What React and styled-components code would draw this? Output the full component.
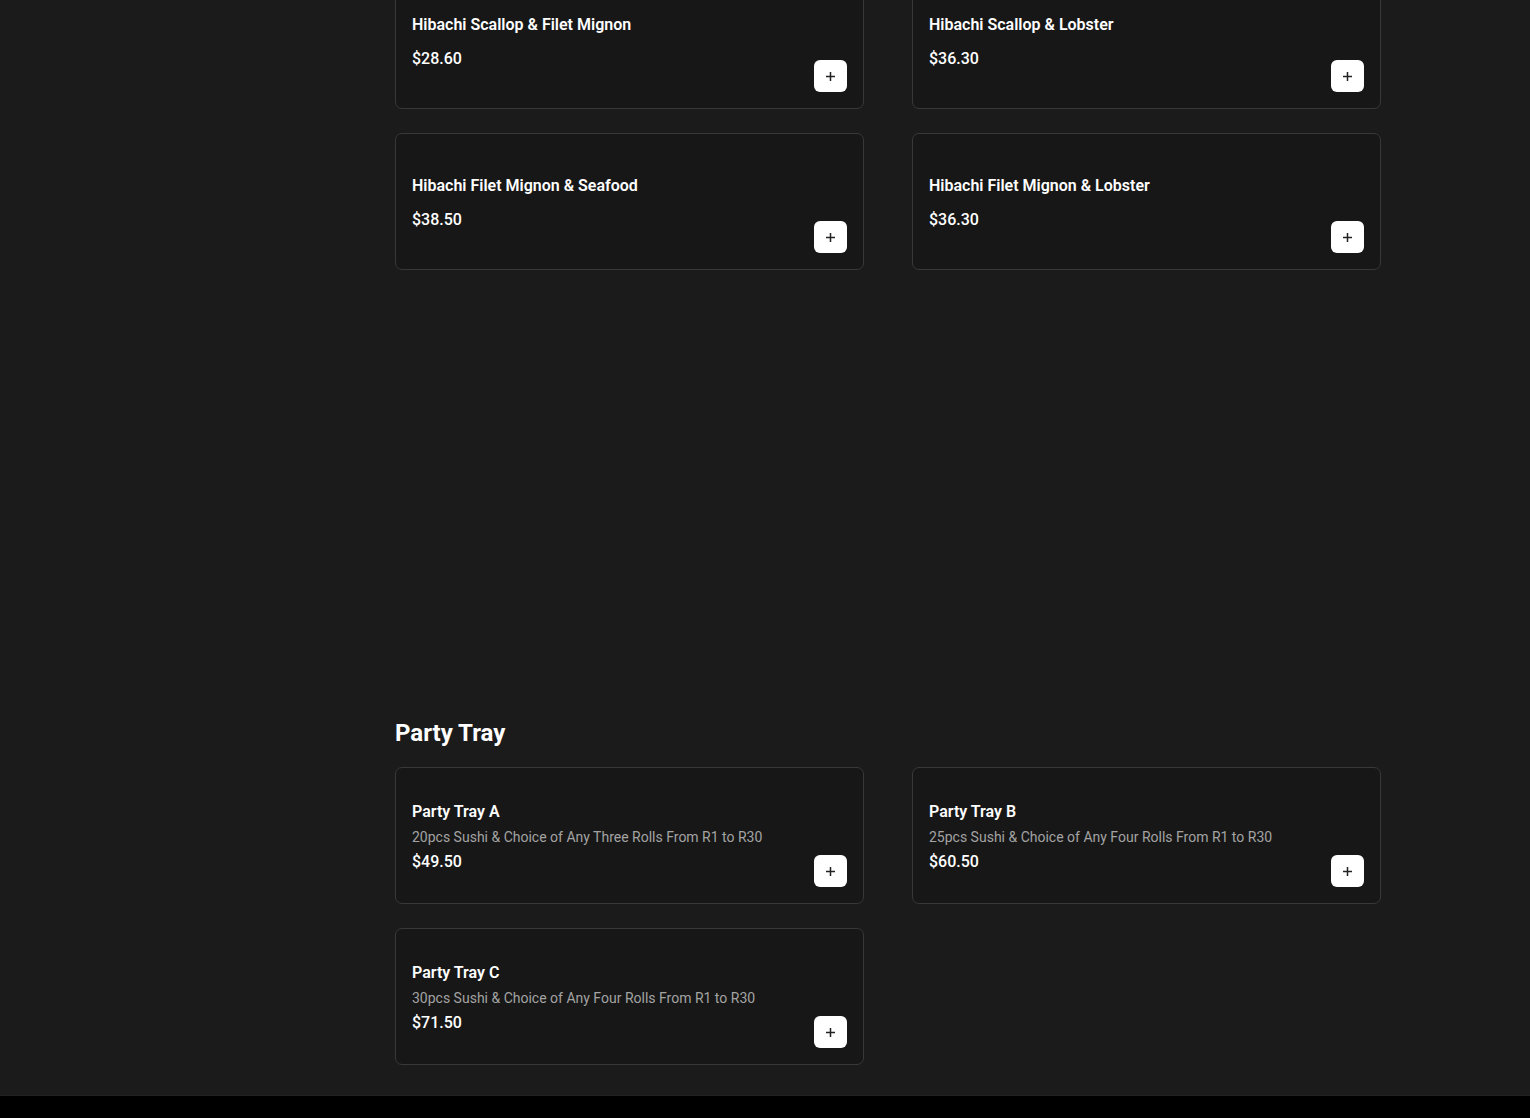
import React from "react";
import styled, { createGlobalStyle } from "styled-components";

const Global = createGlobalStyle`
  html, body { margin: 0; padding: 0; background: #1b1b1b; }
  body { font-family: Roboto, "Liberation Sans", Arial, sans-serif; color: #fff; }
  * { box-sizing: border-box; }
`;

const Page = styled.div`
  display: flex;
  flex-direction: column;
  min-height: 100vh;
  overflow: hidden;
`;

const Main = styled.main`
  padding: 0 149px 30px 395px;
  margin-top: -28px;
`;

const Section = styled.section`
  margin-bottom: ${(p) => p.$gap || 0}px;
`;

const SectionTitle = styled.h2`
  margin: 0 0 18px;
  font-size: 24px;
  line-height: 32px;
  font-weight: 700;
  color: #fff;
`;

const Grid = styled.div`
  display: grid;
  grid-template-columns: 1fr 1fr;
  column-gap: 48px;
  row-gap: 24px;
`;

const Card = styled.div`
  display: flex;
  align-items: stretch;
  height: 137px;
  padding: 16px;
  background: #171717;
  border: 1px solid #383838;
  border-radius: 7px;
`;

const Info = styled.div`
  flex: 1;
  display: flex;
  flex-direction: column;
  justify-content: center;
  min-width: 0;
  padding-top: 2px;
`;

const Name = styled.div`
  font-size: 16px;
  line-height: 24px;
  font-weight: 600;
  color: #fff;
`;

const Desc = styled.div`
  margin-top: 3px;
  font-size: 14px;
  line-height: 20px;
  color: #a3a3a3;
`;

const Price = styled.div`
  margin-top: ${(p) => (p.$withDesc ? 3 : 10)}px;
  font-size: 16px;
  line-height: 24px;
  font-weight: 500;
  color: #fff;
`;

const AddButton = styled.button`
  align-self: flex-end;
  flex: none;
  width: 33px;
  height: 32px;
  padding: 0;
  border: none;
  border-radius: 6px;
  background: #fff;
  display: flex;
  align-items: center;
  justify-content: center;
  cursor: pointer;
`;

const Footer = styled.footer`
  margin-top: auto;
  height: 60px;
  background: #000;
  border-top: 1px solid #222;
`;

const Plus = () => (
  <svg width="11" height="11" viewBox="0 0 11 11" fill="none">
    <path d="M5.5 1v9M1 5.5h9" stroke="#222" strokeWidth="1.5" />
  </svg>
);

const hibachi = [
  { name: "Hibachi Scallop & Filet Mignon", price: "$28.60" },
  { name: "Hibachi Scallop & Lobster", price: "$36.30" },
  { name: "Hibachi Filet Mignon & Seafood", price: "$38.50" },
  { name: "Hibachi Filet Mignon & Lobster", price: "$36.30" },
];

const party = [
  { name: "Party Tray A", desc: "20pcs Sushi & Choice of Any Three Rolls From R1 to R30", price: "$49.50" },
  { name: "Party Tray B", desc: "25pcs Sushi & Choice of Any Four Rolls From R1 to R30", price: "$60.50" },
  { name: "Party Tray C", desc: "30pcs Sushi & Choice of Any Four Rolls From R1 to R30", price: "$71.50" },
];

const Item = ({ name, desc, price }) => (
  <Card>
    <Info>
      <Name>{name}</Name>
      {desc && <Desc>{desc}</Desc>}
      <Price $withDesc={!!desc}>{price}</Price>
    </Info>
    <AddButton aria-label="Add">
      <Plus />
    </AddButton>
  </Card>
);

export default function App() {
  return (
    <Page>
      <Global />
      <Main>
        <Section $gap={447}>
          <Grid>
            {hibachi.map((it) => (
              <Item key={it.name} {...it} />
            ))}
          </Grid>
        </Section>
        <Section>
          <SectionTitle>Party Tray</SectionTitle>
          <Grid>
            {party.map((it) => (
              <Item key={it.name} {...it} />
            ))}
          </Grid>
        </Section>
      </Main>
      <Footer />
    </Page>
  );
}
